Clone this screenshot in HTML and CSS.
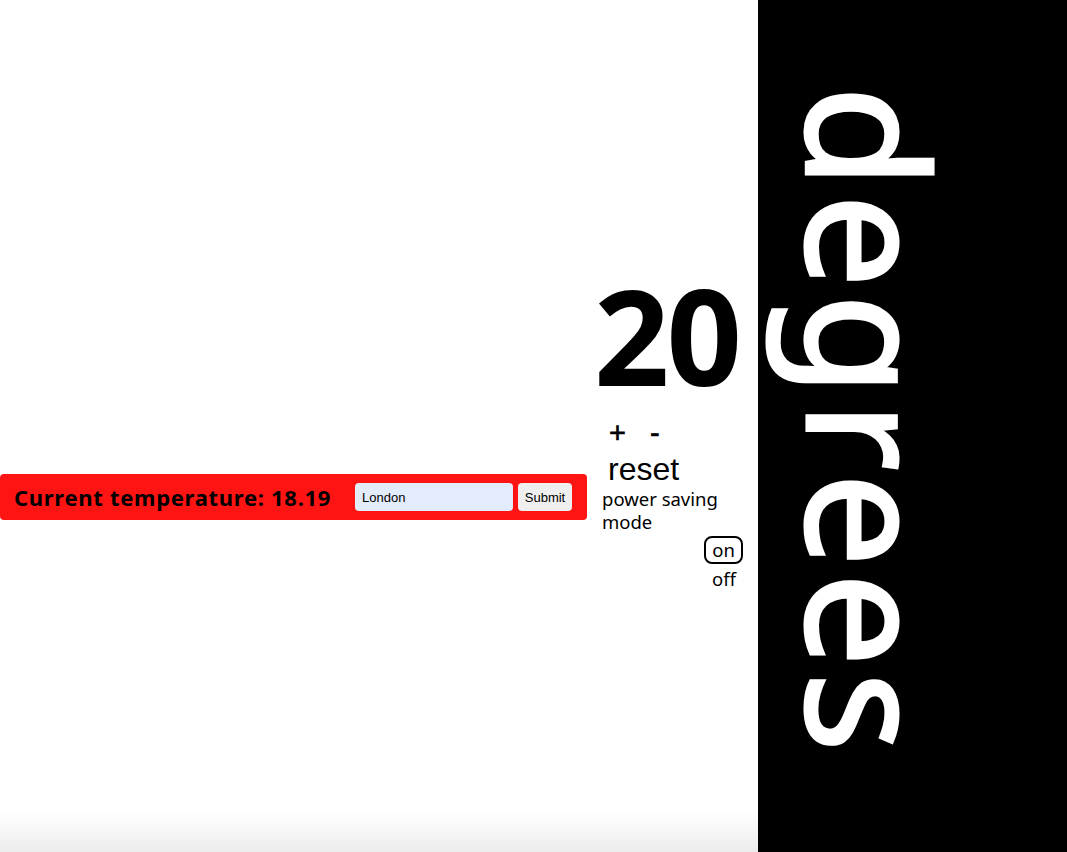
FILE: index.html
```html
<!DOCTYPE html>
<html lang="en">
<head>
<meta charset="utf-8">
<title>Thermostat</title>
<link rel="stylesheet" href="styles.css">
</head>
<body>
<div class="page">
  <main class="main">
    <form class="bar">
      <h2 class="current">Current temperature: 18.19</h2>
      <input class="city" type="text" value="London">
      <button class="submit" type="button">Submit</button>
    </form>
    <section class="controls">
      <div class="temp">20</div>
      <div class="adjust"><span class="plus">+</span><span class="minus">-</span></div>
      <div class="reset">reset</div>
      <div class="psm">power saving mode</div>
      <div class="toggle">
        <span class="on">on</span>
        <span class="off">off</span>
      </div>
    </section>
  </main>
  <aside class="panel">
    <div class="degrees">degrees</div>
  </aside>
</div>
</body>
</html>
```
FILE: styles.css
```css
html, body {
  margin: 0;
  padding: 0;
}
body {
  font-family: "Noto Sans", "Open Sans", sans-serif;
  color: #000;
  overflow: hidden;
}
.page {
  display: flex;
  height: 852px;
}
.main {
  flex: 0 0 758px;
  display: flex;
  align-items: flex-start;
  background: linear-gradient(to bottom, #fff 0, #fff 812px, #ececec 852px);
}
.bar {
  margin-top: 474px;
  width: 587px;
  height: 46px;
  box-sizing: border-box;
  background: #ff1414;
  border-radius: 4px;
  display: flex;
  align-items: center;
  padding-left: 14px;
}
.current {
  margin: 0;
  font-size: 22px;
  font-weight: 700;
  letter-spacing: 0.7px;
  width: 341px;
  white-space: nowrap;
}
.city {
  width: 158px;
  height: 28px;
  box-sizing: border-box;
  border: none;
  border-radius: 4px;
  background: #e3ecfb;
  font-family: "Liberation Sans", Arial, sans-serif;
  font-size: 13px;
  padding: 0 7px;
  color: #000;
}
.submit {
  margin-left: 5px;
  width: 54px;
  height: 28px;
  border: none;
  border-radius: 4px;
  background: #efefef;
  font-family: "Liberation Sans", Arial, sans-serif;
  font-size: 13px;
  padding: 0;
  color: #000;
}
.controls {
  margin-left: 11px;
  margin-top: 265px;
  width: 148px;
  display: flex;
  flex-direction: column;
}
.temp {
  font-size: 132px;
  font-weight: 700;
  line-height: 140px;
  letter-spacing: -3px;
  margin-left: -4px;
}
.adjust {
  font-family: "Liberation Sans", Arial, sans-serif;
  font-size: 29px;
  line-height: 30px;
  margin-top: 13px;
  padding-left: 11px;
  display: flex;
  gap: 24px;
  -webkit-text-stroke: 0.6px #000;
}
.reset {
  font-family: "Liberation Sans", Arial, sans-serif;
  font-size: 32px;
  line-height: 36px;
  margin-top: 3px;
  padding-left: 10px;
}
.psm {
  font-size: 18.5px;
  line-height: 23px;
  padding-left: 4px;
  width: 140px;
}
.toggle {
  display: flex;
  flex-direction: column;
  align-items: flex-end;
  padding-right: 3px;
  margin-top: 3px;
}
.on {
  font-size: 18.5px;
  line-height: 24px;
  border: 2px solid #000;
  border-radius: 8px;
  padding: 0 6px;
}
.off {
  font-size: 18.5px;
  line-height: 22px;
  margin-top: 4px;
  margin-right: 7px;
}
.panel {
  flex: 1;
  background: #000;
  color: #fff;
  padding-top: 86px;
  padding-left: 30px;
}
.degrees {
  writing-mode: vertical-rl;
  font-family: "Noto Sans", sans-serif;
  font-size: 166px;
  line-height: 1;
  font-weight: 400;
  letter-spacing: 6px;
  -webkit-text-stroke: 3px #fff;
  color: #fff;
}
```
